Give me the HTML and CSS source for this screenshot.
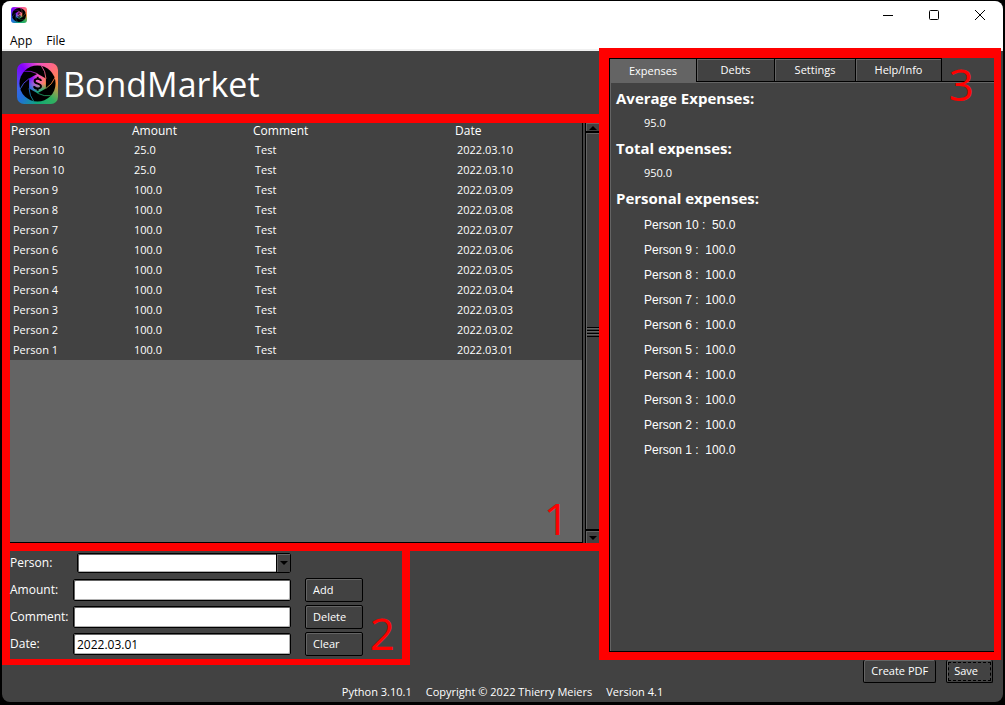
FILE: index.html
```html
<!DOCTYPE html>
<html lang="en">
<head>
<meta charset="utf-8">
<title>BondMarket</title>
<link rel="stylesheet" href="styles.css">
</head>
<body>
<svg class="defs" aria-hidden="true">
  <defs>
    <mask id="shutter">
      <circle cx="21" cy="21" r="18.5" fill="#fff"/>
      <path d="M21 11 29.6 16 29.6 26 21 31 12.400 26 12.400 16Z" fill="#000"/>
      <g fill="none" stroke="#000" stroke-width="0.8">
        <path d="M21 11Q14 7.500 7.500 8.500"/>
        <path d="M21 11Q14 7.500 7.500 8.500" transform="rotate(60 21 21)"/>
        <path d="M21 11Q14 7.500 7.500 8.500" transform="rotate(120 21 21)"/>
        <path d="M21 11Q14 7.500 7.500 8.500" transform="rotate(180 21 21)"/>
        <path d="M21 11Q14 7.500 7.500 8.500" transform="rotate(240 21 21)"/>
        <path d="M21 11Q14 7.500 7.500 8.500" transform="rotate(300 21 21)"/>
      </g>
    </mask>
    <symbol id="aperture" viewBox="0 0 42 42">
      <rect width="42" height="42" mask="url(#shutter)"/>
      <path d="M24.500 18.500C24.500 15.500 18 15.500 18 18.600 18 21.800 24.600 20.400 24.600 23.800 24.600 27 17.600 27 17.500 23.700M21.200 14V17M21.200 25.500V28.500" fill="none" stroke="#000" stroke-width="2"/>
    </symbol>
  </defs>
</svg>
<div class="window">
  <header class="titlebar">
    <span class="logo logo-small"><svg><use href="#aperture"/></svg></span>
    <div class="controls">
      <button aria-label="Minimize"><svg viewBox="0 0 12 12"><path d="M1 6.500H11"/></svg></button>
      <button aria-label="Maximize"><svg viewBox="0 0 12 12"><rect x="1.500" y="1.500" width="9" height="9" rx="1"/></svg></button>
      <button aria-label="Close"><svg viewBox="0 0 12 12"><path d="M1 1 11 11M11 1 1 11"/></svg></button>
    </div>
  </header>
  <nav class="menubar"><button>App</button><button>File</button></nav>
  <main class="main">
    <div class="left">
      <div class="brand">
        <span class="logo logo-large"><svg><use href="#aperture"/></svg></span>
        <h1>BondMarket</h1>
      </div>
      <section class="region records">
        <div class="tree">
          <table>
            <colgroup><col class="c-short"><col class="c-short"><col class="c-long"><col></colgroup>
            <thead><tr><th>Person</th><th>Amount</th><th>Comment</th><th>Date</th></tr></thead>
            <tbody>
              <tr><td>Person 10</td><td>25.0</td><td>Test</td><td>2022.03.10</td></tr>
              <tr><td>Person 10</td><td>25.0</td><td>Test</td><td>2022.03.10</td></tr>
              <tr><td>Person 9</td><td>100.0</td><td>Test</td><td>2022.03.09</td></tr>
              <tr><td>Person 8</td><td>100.0</td><td>Test</td><td>2022.03.08</td></tr>
              <tr><td>Person 7</td><td>100.0</td><td>Test</td><td>2022.03.07</td></tr>
              <tr><td>Person 6</td><td>100.0</td><td>Test</td><td>2022.03.06</td></tr>
              <tr><td>Person 5</td><td>100.0</td><td>Test</td><td>2022.03.05</td></tr>
              <tr><td>Person 4</td><td>100.0</td><td>Test</td><td>2022.03.04</td></tr>
              <tr><td>Person 3</td><td>100.0</td><td>Test</td><td>2022.03.03</td></tr>
              <tr><td>Person 2</td><td>100.0</td><td>Test</td><td>2022.03.02</td></tr>
              <tr><td>Person 1</td><td>100.0</td><td>Test</td><td>2022.03.01</td></tr>
            </tbody>
          </table>
        </div>
        <div class="scrollbar">
          <button class="arrow arrow-up" aria-label="Scroll up"><svg viewBox="0 0 8 4"><path d="M0 4 4 0 8 4Z"/></svg></button>
          <div class="thumb"><span class="grip"></span></div>
          <button class="arrow arrow-down" aria-label="Scroll down"><svg viewBox="0 0 8 4"><path d="M0 0H8L4 4Z"/></svg></button>
        </div>
        <span class="mark mark-1">1</span>
      </section>
      <form class="region entry">
        <label for="person">Person:</label>
        <div class="combo"><input id="person" type="text"><button type="button" aria-label="Choose person"><svg viewBox="0 0 8 4"><path d="M0 0H8L4 4Z"/></svg></button></div>
        <span></span>
        <label for="amount">Amount:</label><input id="amount" type="text"><button type="button" class="btn">Add</button>
        <label for="comment">Comment:</label><input id="comment" type="text"><button type="button" class="btn">Delete</button>
        <label for="date">Date:</label><input id="date" type="text" value="2022.03.01"><button type="button" class="btn">Clear</button>
        <span class="mark mark-2">2</span>
      </form>
    </div>
    <div class="right">
      <section class="region panel">
        <div class="tabs" role="tablist">
          <button role="tab" class="tab tab-expenses" aria-selected="true">Expenses</button>
          <button role="tab" class="tab tab-debts">Debts</button>
          <button role="tab" class="tab tab-settings">Settings</button>
          <button role="tab" class="tab tab-help">Help/Info</button>
        </div>
        <div class="page">
          <h2>Average Expenses:</h2><p>95.0</p>
          <h2>Total expenses:</h2><p>950.0</p>
          <h2>Personal expenses:</h2>
          <ul>
            <li>Person 10 :&nbsp; 50.0</li>
            <li>Person 9 :&nbsp; 100.0</li>
            <li>Person 8 :&nbsp; 100.0</li>
            <li>Person 7 :&nbsp; 100.0</li>
            <li>Person 6 :&nbsp; 100.0</li>
            <li>Person 5 :&nbsp; 100.0</li>
            <li>Person 4 :&nbsp; 100.0</li>
            <li>Person 3 :&nbsp; 100.0</li>
            <li>Person 2 :&nbsp; 100.0</li>
            <li>Person 1 :&nbsp; 100.0</li>
          </ul>
        </div>
        <span class="mark mark-3">3</span>
      </section>
      <div class="actions"><button class="btn">Create PDF</button><button class="btn focused">Save</button></div>
    </div>
  </main>
  <footer class="status"><span>Python 3.10.1</span><span>Copyright © 2022 Thierry Meiers</span><span>Version 4.1</span></footer>
</div>
</body>
</html>
```
FILE: styles.css
```css
* { box-sizing: border-box; }
body {
  margin: 0;
  padding: 1px 2px 3px;
  min-height: 100vh;
  display: flex;
  background: #000;
  color: #fff;
  font: 12px/16px "Open Sans", "Noto Sans", sans-serif;
}
button, input { font: inherit; color: inherit; margin: 0; border: 0; padding: 0; background: none; border-radius: 0; }
h1, h2, p, ul { margin: 0; padding: 0; font-weight: 400; list-style: none; }
.defs { position: absolute; width: 0; height: 0; }
.window { flex: 1; display: flex; flex-direction: column; background: #424242; border-radius: 8px; overflow: hidden; }

.titlebar { height: 28px; display: flex; align-items: center; justify-content: space-between; background: #fff; padding-left: 9px; }
.logo { display: block; background: radial-gradient(circle, #e868c0 0, #e868c000 30%), conic-gradient(from 0deg, #f050c8, #ff6a80 12%, #ff9040 25%, #30b060 38%, #10a878 50%, #2070d8 63%, #4060e8 72%, #8000ff 88%, #f050c8); }
.logo svg { display: block; width: 100%; height: 100%; }
.logo-small { width: 16px; height: 16px; border-radius: 3px; }
.logo-large { width: 41px; height: 41px; border-radius: 7px; }
.controls { display: flex; }
.controls button { width: 46px; height: 28px; display: grid; place-items: center; }
.controls svg { width: 12px; height: 12px; fill: none; stroke: #000; }
.menubar { height: 22px; display: flex; gap: 14px; padding: 3px 0 0 8px; background: #fff; color: #000; border-bottom: 2px solid #f0f0f0; }

.main { flex: 1; display: flex; padding-right: 2px; }
.left { flex: 597; min-width: 0; display: flex; flex-direction: column; padding-bottom: 18px; }
.right { flex: 402; min-width: 0; display: flex; flex-direction: column; margin-top: -3px; }
.brand { height: 63px; display: flex; align-items: center; gap: 5px; padding: 2px 0 0 15px; }
.brand h1 { font-size: 34px; line-height: 44px; }

.region { position: relative; border: 0 solid #f00; }
.mark { position: absolute; color: #f00; font-size: 44px; line-height: 44px; font-weight: 500; }
.mark-1 { right: 30px; bottom: 3px; }
.mark-2 { right: 7px; bottom: 4px; }
.mark-3 { right: 20px; top: 4px; }

.records { flex: 1; display: flex; gap: 2px; border-width: 9px 0 8px 8px; font-size: 11px; }
.tree { flex: 1; background: #646464; border-right: 1px solid #000; border-bottom: 1px solid #000; }
table { width: 100%; table-layout: fixed; border-collapse: collapse; background: #424242; }
.c-short { width: 121px; }
.c-long { width: 202px; }
th { height: 17px; padding: 0 1px 2px; font-size: 12px; line-height: 15px; font-weight: 400; text-align: left; }
td { height: 20px; padding: 0 3px; }
.scrollbar { width: 14px; display: flex; flex-direction: column; border-left: 1px solid #000; background: #000; gap: 2px; }
.arrow { height: 12px; background: #424242; border: 1px solid #646464; border-width: 1px 0 0 1px; display: grid; place-items: center; }
.arrow-up { height: 8px; }
.arrow svg, .combo svg { display: block; width: 8px; height: 4px; }
.thumb { flex: 1; background: #424242; border: 1px solid #646464; border-width: 1px 0 0 1px; display: grid; align-items: center; }
.grip { height: 10px; background: repeating-linear-gradient(#000 0 1px, #646464 1px 2px, #424242 2px 3px); }

.entry { align-self: flex-start; width: 408px; display: grid; grid-template-columns: 63px 218px 58px; grid-auto-rows: 24px; row-gap: 3px; align-items: center; padding-bottom: 3px; border-width: 0 8px 6px 8px; }
.entry .btn { margin-left: 14px; width: 58px; height: 24px; }
.entry label { white-space: nowrap; line-height: 18px; }
.entry > input, .combo { height: 22px; border: 1px solid #000; border-radius: 2px; background: #fff; color: #000; padding: 0 3px; box-shadow: inset 1px 1px #646464, inset -1px -1px #b0b0b0; width: 100%; }
.combo { height: 20px; width: auto; margin-left: 4px; display: flex; padding: 0; }
.combo input { flex: 1; min-width: 0; }
.combo button { width: 14px; background: #424242; border-left: 1px solid #000; box-shadow: inset 1px 1px #646464; display: grid; place-items: center; }
.btn { padding: 0 7px; font-size: 11px; text-align: left; background: #424242; border: 1px solid #000; border-radius: 2px; box-shadow: inset 1px 1px #646464; white-space: nowrap; }

.panel { flex: 1; display: flex; flex-direction: column; border-width: 10px 7px 8px 10px; }
.tabs { display: flex; border-bottom: 1px solid #000; border-left: 1px solid #000; }
.tab { height: 23px; border-right: 1px solid #000; border-top: 1px solid #000; box-shadow: inset 1px 1px #646464; font-size: 11px; text-align: center; }
.tab[aria-selected] { background: #646464; margin-bottom: -1px; height: 24px; }
.tab-expenses { width: 87px; }
.tab-debts { width: 78px; }
.tab-settings { width: 81px; }
.tab-help { width: 86px; }
.page { flex: 1; border: solid #000; border-width: 0 0 1px 1px; box-shadow: inset 1px 1px #646464; padding: 4px 6px; }
h2 { font-size: 15px; line-height: 24px; font-weight: 700; }
.page p { line-height: 26px; padding-left: 28px; font-size: 11px; }
li { font: 12px/25px "Liberation Sans", Arial, sans-serif; padding-left: 28px; }
ul { padding-top: 3px; }
.actions { display: flex; justify-content: flex-end; gap: 10px; padding-right: 8px; height: 23px; }
.actions .btn { border-top: 0; }
.actions .focused { outline: 1px dashed #000; outline-offset: -3px; padding-right: 14px; }
.status { height: 19px; display: flex; justify-content: center; gap: 14px; font-size: 11px; line-height: 18px; }
```
